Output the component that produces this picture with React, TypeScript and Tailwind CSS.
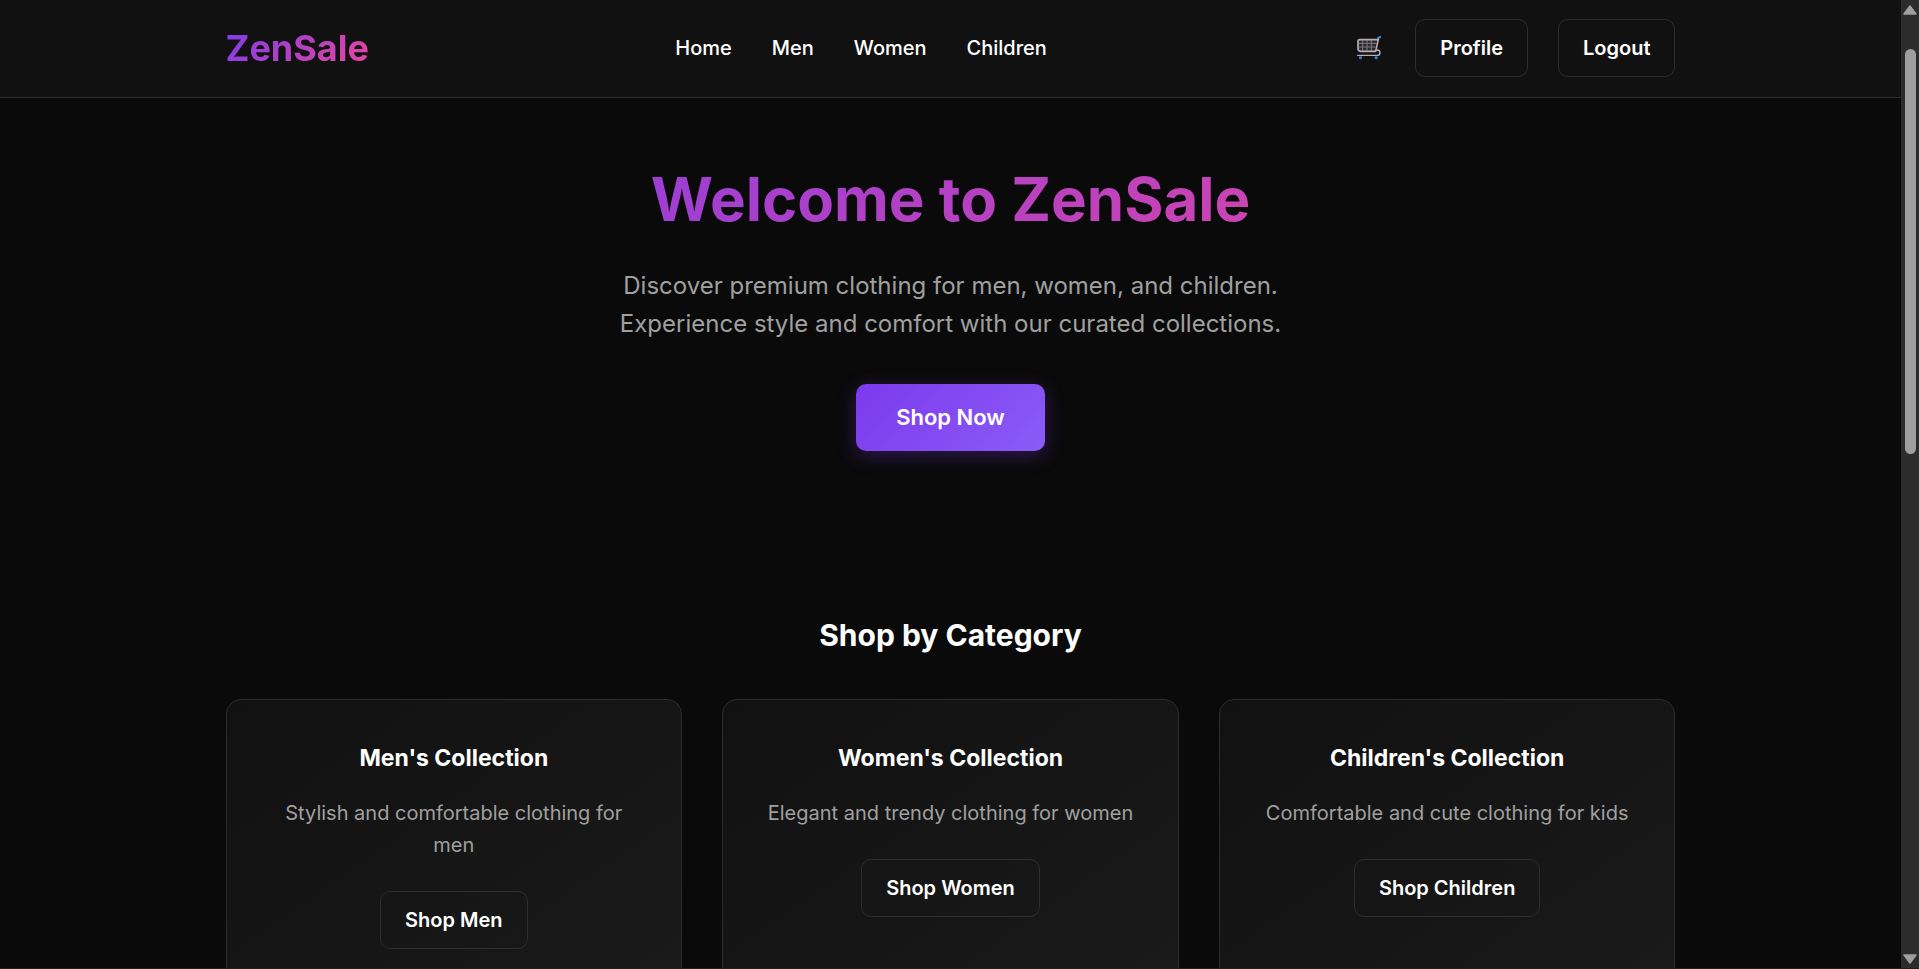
import React from 'react';

const navLinks = ['Home', 'Men', 'Women', 'Children'];

const categories = [
  { id: 'men', title: "Men's Collection", text: 'Stylish and comfortable clothing for men', action: 'Shop Men' },
  { id: 'women', title: "Women's Collection", text: 'Elegant and trendy clothing for women', action: 'Shop Women' },
  { id: 'children', title: "Children's Collection", text: 'Comfortable and cute clothing for kids', action: 'Shop Children' },
];

function CartIcon() {
  return (
    <svg viewBox="0 0 72 72" className="w-6 h-6" fill="none" aria-hidden="true">
      <path d="M4 12h56l-7 33H8q-4-3-4-8z" fill="#2c2b2e" />
      <path d="M4 22h54M4 33h51M17 12v33M30 12v33M43 12v33" stroke="#7d7a82" strokeWidth="3" />
      <path d="M65 5l-9 41H11q-8 0-8-9V16q0-5 5-5h54" stroke="#b4afb8" strokeWidth="5" strokeLinejoin="round" />
      <path d="M60 42q9 0 9 8t-8 8H2" stroke="#b4afb8" strokeWidth="4" strokeLinecap="round" />
      <path d="M64 5l6-2" stroke="#3b88d8" strokeWidth="6" strokeLinecap="round" />
      <rect x="6" y="61" width="9" height="9" rx="3" fill="#3b78c4" />
      <rect x="53" y="61" width="9" height="9" rx="3" fill="#3b78c4" />
    </svg>
  );
}

function OutlineButton({ children }: { children: React.ReactNode }) {
  return (
    <button className="px-6 py-[15px] rounded-[10px] border border-[#2d2d2d] text-xl leading-[26px] font-semibold text-white hover:border-[#7c3aed] transition-colors">
      {children}
    </button>
  );
}

function Header() {
  return (
    <header className="bg-[#111111] border-b border-[#2d2d2d]">
      <div className="max-w-[1500px] mx-auto px-[25px] pt-[19px] pb-5 flex items-center justify-between">
        <a
          href="#"
          className="text-4xl leading-[57px] font-bold text-transparent bg-clip-text bg-[linear-gradient(135deg,#7c3aed,#ec4899)]"
        >
          ZenSale
        </a>

        <nav className="flex items-center gap-10">
          {navLinks.map((link) => (
            <a key={link} href="#" className="text-xl leading-8 font-medium text-white">
              {link}
            </a>
          ))}
        </nav>

        <div className="flex items-center gap-[30px]">
          <a href="#" aria-label="Cart" className="w-8 flex justify-center">
            <CartIcon />
          </a>
          <OutlineButton>Profile</OutlineButton>
          <OutlineButton>Logout</OutlineButton>
        </div>
      </div>
    </header>
  );
}

function Hero() {
  return (
    <section className="pt-[53px] pb-40 text-center">
      <h1 className="mb-5 text-6xl leading-[96px] font-bold text-transparent bg-clip-text bg-[linear-gradient(135deg,#7c3aed,#ec4899)]">
        Welcome to ZenSale
      </h1>
      <p className="max-w-[750px] mx-auto mb-[41px] text-2xl leading-[38px] text-[#a0a0a0]">
        Discover premium clothing for men, women, and children. Experience style and comfort with our curated
        collections.
      </p>
      <button className="px-10 py-5 rounded-[10px] text-[22px] leading-[27px] font-semibold text-white bg-[linear-gradient(135deg,#7c3aed,#8b5cf6)] shadow-[0_5px_19px_rgba(124,58,237,0.3)]">
        Shop Now
      </button>
    </section>
  );
}

function Categories() {
  return (
    <section className="pb-20">
      <h2 className="mb-10 text-3xl leading-[48px] font-bold text-center text-white">Shop by Category</h2>
      <div className="grid grid-cols-3 gap-10">
        {categories.map((category) => (
          <article
            key={category.id}
            className="p-10 rounded-[15px] border border-[#2d2d2d] text-center bg-[linear-gradient(145deg,#111111,#1a1a1a)]"
          >
            <h3 className="mb-5 text-[23px] leading-[37px] font-bold text-white">{category.title}</h3>
            <p className="mb-[30px] text-xl leading-8 text-[#a0a0a0]">{category.text}</p>
            <OutlineButton>{category.action}</OutlineButton>
          </article>
        ))}
      </div>
    </section>
  );
}

function ScrollTrack() {
  return (
    <div className="w-[18px] shrink-0 pt-[5px] pb-1 flex flex-col items-center bg-[#2c2c2c]" aria-hidden="true">
      <svg viewBox="0 0 14 10" className="w-3.5 h-2.5 shrink-0">
        <path d="M7 1l6 8H1z" fill="#9f9f9f" stroke="#9f9f9f" strokeWidth="1.5" strokeLinejoin="round" />
      </svg>
      <div className="flex-1 w-[11px] pt-[34px] pb-6">
        <div className="h-[46%] w-full rounded-full bg-[#9f9f9f]" />
      </div>
      <svg viewBox="0 0 14 10" className="w-3.5 h-2.5 shrink-0">
        <path d="M7 9l6-8H1z" fill="#9f9f9f" stroke="#9f9f9f" strokeWidth="1.5" strokeLinejoin="round" />
      </svg>
    </div>
  );
}

export default function App() {
  return (
    <div className="h-screen flex flex-col overflow-hidden bg-[#0a0a0a] text-white font-['Inter',sans-serif]">
      <div className="flex-1 min-h-0 flex">
        <div className="flex-1 min-w-0 overflow-hidden">
          <Header />
          <main className="max-w-[1500px] mx-auto px-[25px]">
            <Hero />
            <Categories />
          </main>
        </div>
        <ScrollTrack />
      </div>
      <div className="h-px shrink-0 bg-[#202020]" />
    </div>
  );
}
